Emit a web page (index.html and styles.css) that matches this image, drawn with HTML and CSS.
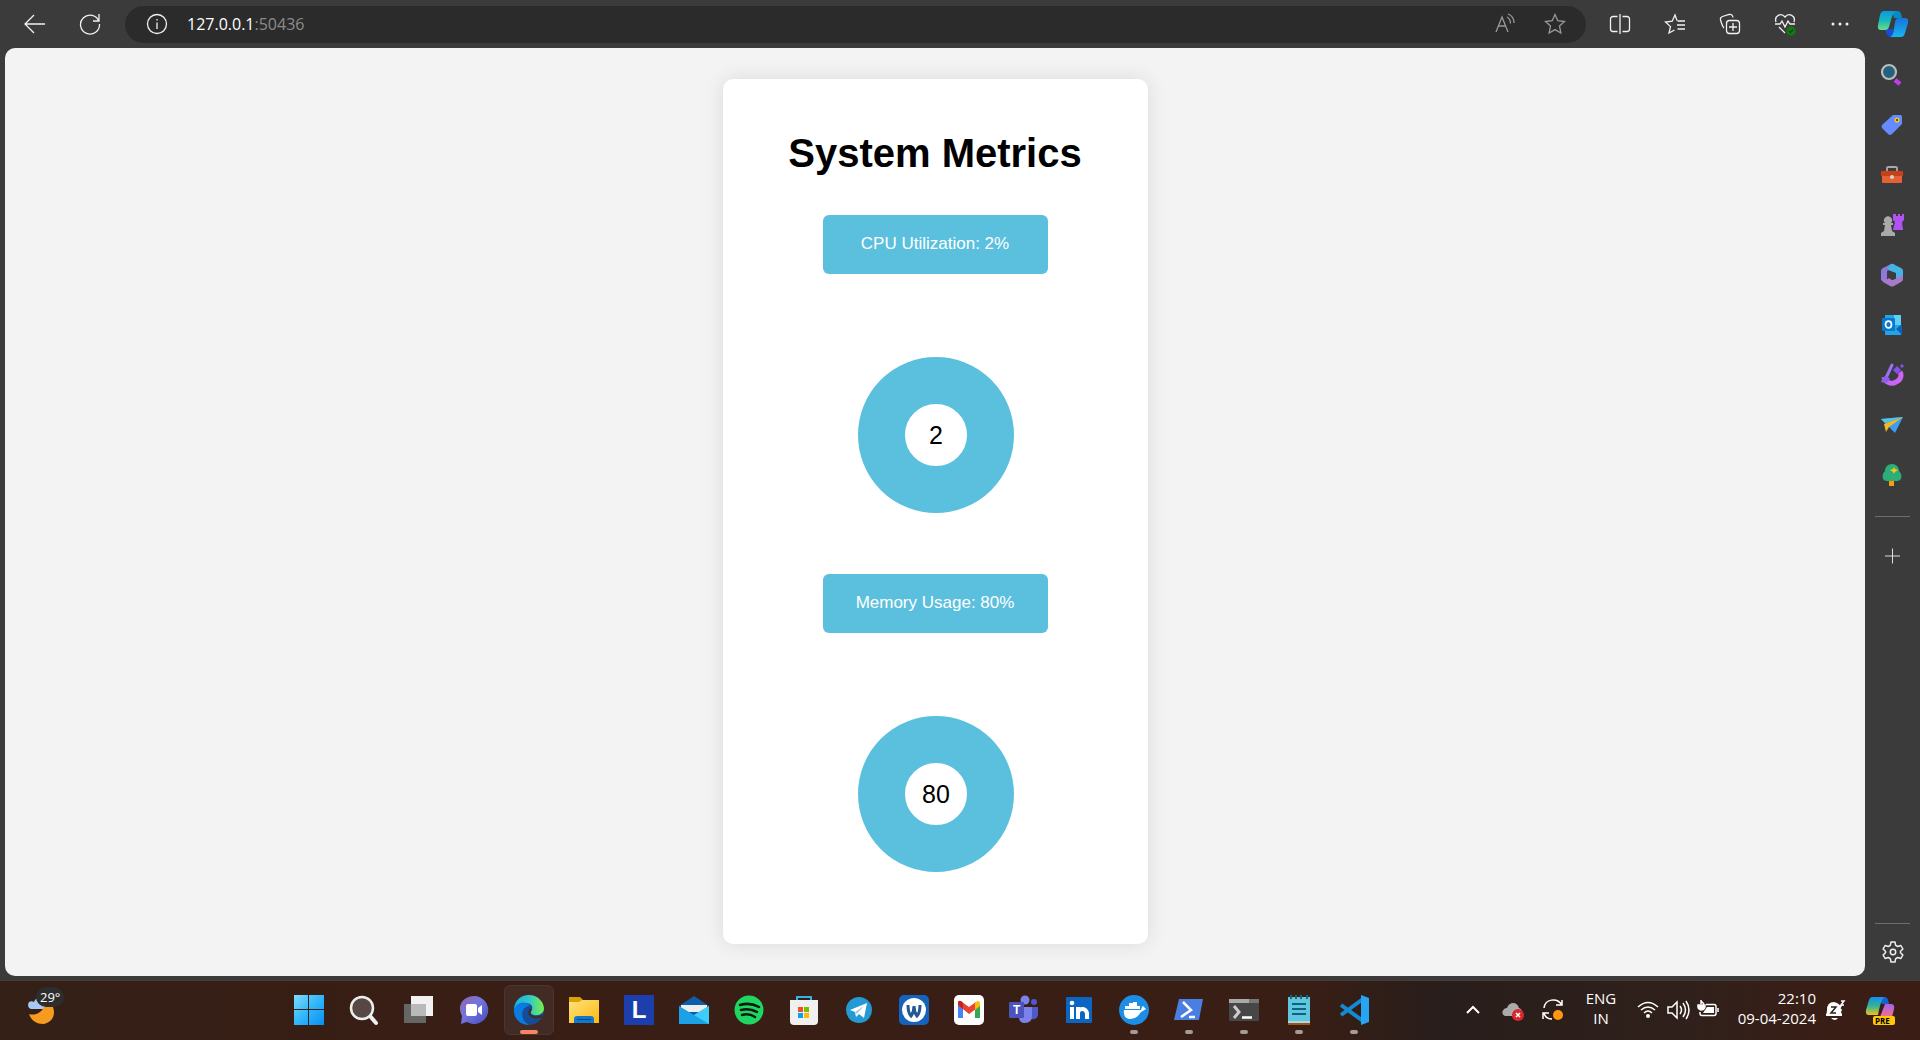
FILE: index.html
```html
<!DOCTYPE html>
<html lang="en">
<head>
<meta charset="utf-8">
<title>System Metrics</title>
<link rel="stylesheet" href="styles.css">
</head>
<body>
<div class="desktop">
  <div class="browser">
    <header class="toolbar">
      <button class="tool" aria-label="Back"><svg width="24" height="24" viewBox="0 0 24 24"><path d="M22 12H2.500M11 3L2 12l9 9"/></svg></button>
      <button class="tool refresh" aria-label="Refresh"><svg width="24" height="24" viewBox="0 0 24 24"><path d="M21 9.500A9.500 9.500 0 1 0 21.500 12M21 2v7h-6"/></svg></button>
      <div class="address">
        <button class="tool info" aria-label="Site information"><svg width="24" height="24" viewBox="0 0 24 24"><circle cx="12" cy="12" r="9.500"/><path d="M12 10.500v6.500M12 7v1.500"/></svg></button>
        <a class="url" href="#">127.0.0.1<span class="port">:50436</span></a>
        <button class="tool dim" aria-label="Read aloud"><svg width="24" height="24" viewBox="0 0 24 24"><path d="M3 20L9 5l6 15M5.500 14h7M14 5c2 1 3.500 3 3.500 6.500M15 2c4 1.500 6 4 6 9"/></svg></button>
        <button class="tool dim" aria-label="Add to favorites"><svg width="24" height="24" viewBox="0 0 24 24"><path d="M12 2.500l2.800 6.200 6.700.8-5 4.600 1.400 6.900-5.900-3.400-5.900 3.400 1.400-6.900-5-4.600 6.700-.8z"/></svg></button>
      </div>
      <div class="actions">
        <button class="tool" aria-label="Split screen"><svg width="24" height="24" viewBox="0 0 24 24"><path d="M9.500 4.500H5a2.500 2.500 0 0 0-2.500 2.500v10A2.500 2.500 0 0 0 5 19.500h4.500M14.500 4.500H19a2.500 2.500 0 0 1 2.500 2.500v10a2.500 2.500 0 0 1-2.500 2.500h-4.500M12 2v20"/></svg></button>
        <button class="tool" aria-label="Favorites"><svg width="24" height="24" viewBox="0 0 24 24"><path d="M14 8.500l-2-5.500-2.800 6.200-6.700.8 5 4.600L6 21l5.500-3M14.500 9H22M14 13h8M14.500 17H22"/></svg></button>
        <button class="tool" aria-label="Collections"><svg width="24" height="24" viewBox="0 0 24 24"><rect x="8.500" y="8.500" width="13" height="13" rx="3"/><path d="M15 11v8M11 15h8M6 16c-1-1-2-3-3.500-8-.4-2 .5-3 2-3.500L11 2.500c2-.5 3.500 0 4 3"/></svg></button>
        <button class="tool" aria-label="Browser essentials"><svg width="24" height="24" viewBox="0 0 24 24"><path d="M3 10C1 4 8 0 12 5c4-5 11-1 9 5M2 12h5l2-3 3 6 3-6 2 3h5M6 15l6 6"/><circle class="ok" cx="18" cy="19" r="4.500"/><path d="M16 19l1.500 1.500L20 17.500" stroke="#064906"/></svg></button>
        <button class="tool" aria-label="More"><svg width="24" height="24" viewBox="0 0 24 24"><g class="fill"><circle cx="5" cy="12" r="1.500"/><circle cx="12" cy="12" r="1.500"/><circle cx="19" cy="12" r="1.500"/></g></svg></button>
      </div>
      <button class="tool copilot" aria-label="Copilot"><svg width="32" height="32" viewBox="0 0 32 32"><defs><linearGradient id="cl" x2="0" y2="1"><stop stop-color="#079be0"/><stop offset=".5" stop-color="#1bb6bb"/><stop offset="1" stop-color="#69dd83"/></linearGradient><linearGradient id="cr" x2="0" y2="1"><stop stop-color="#1773db"/><stop offset="1" stop-color="#17b6f0"/></linearGradient></defs><path fill="#078bc6" d="M15 3h6q3 0 4 7h-8z"/><path fill="#164cd8" d="M8 21h9l-2 8h-2q-3 0-5-8z"/><path fill="url(#cl)" d="M7 3h12q-3 1-5 9l-2 7q-1 3-4 3H4q-4 0-3-5L3 7q1-4 4-4z"/><path fill="url(#cr)" d="M21 10h7q4 0 3 5l-3 10q-1 4-4 4H13q3-1 4-8l1-7q1-4 3-4z"/></svg></button>
    </header>

    <main class="viewport">
      <section class="card">
        <h1>System Metrics</h1>
        <div class="metric">CPU Utilization: 2%</div>
        <div class="chart"><div class="ring">2</div></div>
        <div class="metric">Memory Usage: 80%</div>
        <div class="chart"><div class="ring">80</div></div>
      </section>
    </main>

    <aside class="sidebar">
      <nav class="apps">
        <button class="app" aria-label="Search"><svg width="24" height="24" viewBox="0 0 24 24"><path d="M15 17l5 4" stroke="#c03cf0" stroke-width="4.500"/><circle cx="9" cy="9" r="7" fill="#24617f" stroke="#b9bbbc" stroke-width="2.200"/></svg></button>
        <button class="app" aria-label="Shopping"><svg width="24" height="24" viewBox="0 0 24 24"><path d="M13 2h8l1 1v8L12 21q-2 2-4 0L2 15q-1-2 0-3z" fill="#668bff"/><circle cx="17" cy="7" r="1.800" fill="#333" stroke="#f5ca16" stroke-width="1.500"/></svg></button>
        <button class="app" aria-label="Tools"><svg width="24" height="24" viewBox="0 0 24 24"><path d="M7 8V5q0-1 2-1h6q2 0 2 1v3" fill="none" stroke="#aaa" stroke-width="1.800"/><rect x="2" y="9" width="20" height="11" rx="1" fill="#e56032"/><path d="M1 8h22v5H1z" fill="#c94016"/><circle cx="12" cy="14" r="2" fill="#d2d2d2"/></svg></button>
        <button class="app" aria-label="Games"><svg width="24" height="24" viewBox="0 0 24 24"><path d="M13 1h3v2h2V1h2v2h2V1h2v6l-2 2 1 8H13l2-8-2-2z" fill="#b152f4"/><path d="M1 23v-3l3-2 1-6H3v-2h2a4 4 0 1 1 6 0h2v2h-2l1 6 3 2v3z" fill="#aaa"/></svg></button>
        <button class="app" aria-label="Microsoft 365"><svg width="24" height="24" viewBox="0 0 24 24"><path d="M11 1L3 5q-2 1-2 3v8q0 2 4 2 2 0 2-3V9q0-2 4-4z" fill="#8c7adb"/><path d="M11 1q2-1 4 1l6 3q2 1 2 3v8l-5 2-2-3V10L8 7q0-4 3-6z" fill="#45b3e5"/><path d="M23 12v4q0 2-2 3l-7 4q-2 1-4 0l-7-4-2-3q5 2 8-1l4 2z" fill="#a979cc"/><path d="M9 8l3 1 4 2v3l-4 3-3-2z" fill="#3b3b3b"/></svg></button>
        <button class="app" aria-label="Outlook"><svg width="24" height="24" viewBox="0 0 24 24"><path fill="#24a4e8" d="M5 2h16v20H5z"/><path fill="#60cff8" d="M14 2h7v10h-7z"/><path fill="#0b65b5" d="M16 16l6-5v11z"/><rect x="2" y="5" width="13" height="13" rx="1" fill="#0878ce"/><ellipse cx="8.500" cy="11.500" rx="3" ry="3.400" fill="none" stroke="#fff" stroke-width="1.700"/></svg></button>
        <button class="app" aria-label="Image creator"><svg width="24" height="24" viewBox="0 0 24 24"><path d="M4 14c1 5 7 8 12 5 5-2 6-7 4-10" fill="none" stroke="#cb65f8" stroke-width="5"/><path d="M12 2L6 15" stroke="#9c70f2" stroke-width="3" stroke-linecap="round"/><path d="M1 19l2-5 4-1 3 3-2 3-3 1z" fill="#8961e8"/><path d="M17 3l4 4-4 4-4-4zM22 1l2 2-2 2-2-2z" fill="#8451ed"/></svg></button>
        <button class="app" aria-label="Drop"><svg width="24" height="24" viewBox="0 0 24 24"><path d="M1 6l22-2-8 16-5-5z" fill="#3e9df0"/><path d="M4 11L23 4 9 14l-3 5z" fill="#f4b922"/><path d="M1 6l22-2-18 6z" fill="#53c4e3"/></svg></button>
        <button class="app" aria-label="Tree"><svg width="24" height="24" viewBox="0 0 24 24"><path d="M9 17h5v6H9z" fill="#f99c0e"/><path d="M12 1c5 0 7 4 7 7 4 4 3 10-2 10H7c-5 0-6-6-2-10 0-4 3-7 7-7z" fill="#2bae78"/><path d="M14 4l1 2 3 1-3 2-1 2-1-2-3-2 3-1z" fill="#ffc01f"/></svg></button>
      </nav>
      <div class="add"><button class="app" aria-label="Customize"><svg width="24" height="24" viewBox="0 0 24 24"><path d="M4 12h15M11.500 4.500v15" stroke="#ddd"/></svg></button></div>
      <div class="settings"><button class="app" aria-label="Settings"><svg width="24" height="24" viewBox="0 0 24 24"><path d="M10 2h4l.7 3.300 2 1.200 3.200-1 2 3.500-2.400 2.300v1.400l2.400 2.300-2 3.500-3.200-1-2 1.200L14 22h-4l-.7-3.300-2-1.200-3.200 1-2-3.500 2.400-2.300v-1.400L2.100 9l2-3.500 3.200 1 2-1.200z" fill="none" stroke="#eee" stroke-width="1.500" stroke-linejoin="round"/><circle cx="12" cy="12" r="2.700" fill="none" stroke="#eee" stroke-width="1.500"/></svg></button></div>
    </aside>
  </div>

  <footer class="taskbar">
    <button class="weather" aria-label="Weather"><svg width="30" height="32" viewBox="0 0 30 32"><path d="M2 14c-3-6 2-8 5-6 2-6 10-4 9 1 4 2 3 5 0 6H4z" fill="#a9c8f4"/><path d="M2 20c6 2 12-1 15-7h9c3 8-1 16-10 17-7 0-12-4-14-10z" fill="#f69a20"/></svg><span class="temp">29°</span></button>
    <nav class="tasks">
      <button class="task" aria-label="Start"><svg width="32" height="32" viewBox="0 0 32 32"><defs><linearGradient id="win" x2="1" y2="1"><stop stop-color="#7ddcfb"/><stop offset=".5" stop-color="#31b7fa"/><stop offset="1" stop-color="#078ff3"/></linearGradient></defs><path fill="url(#win)" d="M1 1h14v14H1zM16 1h15v14H16zM1 16h14v15H1zM16 16h15v15H16z"/></svg></button>
      <button class="task" aria-label="Search"><svg width="32" height="32" viewBox="0 0 32 32"><path d="M22 22l6 7" stroke="#eee" stroke-width="4" stroke-linecap="round"/><circle cx="14" cy="14" r="11" fill="#584843" stroke="#eee" stroke-width="2.500"/></svg></button>
      <button class="task" aria-label="Task view"><svg width="32" height="32" viewBox="0 0 32 32"><path fill="#666" d="M1 10h22v19H1z"/><path fill="#f1f1f1" d="M8 2h22v20H8z"/><path fill="#b9b9b9" d="M8 10h15v12H8z"/></svg></button>
      <button class="task" aria-label="Chat"><svg width="32" height="32" viewBox="0 0 32 32"><defs><linearGradient id="chat" x2="1" y2="1"><stop stop-color="#9565ac"/><stop offset=".45" stop-color="#7275dc"/><stop offset="1" stop-color="#454cc1"/></linearGradient></defs><path fill="url(#chat)" d="M16 2a14 14 0 1 1-7 26l-6 2 1-8C-2 11 6 2 16 2z"/><rect x="8" y="10" width="11" height="12" rx="2" fill="#fff"/><path fill="#fff" d="M20 14l4-3v10l-4-3z"/></svg></button>
      <button class="task active" aria-label="Edge"><svg width="32" height="32" viewBox="0 0 32 32"><defs><linearGradient id="edge" x2="1" y2="0"><stop stop-color="#1cafe3"/><stop offset=".5" stop-color="#30c6cb"/><stop offset="1" stop-color="#7af047"/></linearGradient></defs><circle cx="16" cy="16" r="15" fill="#164b96"/><path d="M1 15C2 5 9 1 16 1c9 0 15 7 15 14-1 8-13 7-13 4s2-3 1-7c-3-5-12-4-18 3z" fill="url(#edge)"/><path d="M1 15C5 7 14 7 17 12c-8-1-12 13-1 19C6 31 0 23 1 15z" fill="#087ce0"/><path d="M18 15c-5 5 2 11 11 7" fill="none" stroke="#422b24" stroke-width="2"/></svg></button>
      <button class="task" aria-label="File Explorer"><svg width="32" height="32" viewBox="0 0 32 32"><defs><linearGradient id="folder" x2="1" y2="1"><stop stop-color="#ffe27a"/><stop offset="1" stop-color="#fdb913"/></linearGradient></defs><path fill="#dda006" d="M1 3h11l3 3v5H1z"/><path fill="url(#folder)" d="M1 8h10l3-2h17v23H1z"/><path fill="#1378c9" d="M6 29v-4q0-3 3-3h14q3 0 3 3v4z"/><path stroke="#07488b" d="M9 25.500h14"/></svg></button>
      <button class="task" aria-label="L"><span class="letter">L</span></button>
      <button class="task" aria-label="Mail"><svg width="32" height="32" viewBox="0 0 32 32"><path fill="#0c5eaa" d="M1 12l15-10 15 10-15 10z"/><path fill="#eee" d="M3 11h26v7H3z"/><path fill="#1ca1e7" d="M1 12l15 9 15-9v18H1z"/><path fill="#3ccdf8" d="M31 12v18L16 21z"/></svg></button>
      <button class="task" aria-label="Spotify"><svg width="32" height="32" viewBox="0 0 32 32"><circle cx="16" cy="16" r="14.500" fill="#1ed760"/><path d="M7 11q10-3 19 2M8 16q9-2 16 2M9 21q7-2 13 2" fill="none" stroke="#10170f" stroke-width="2.500" stroke-linecap="round"/></svg></button>
      <button class="task" aria-label="Microsoft Store"><svg width="32" height="32" viewBox="0 0 32 32"><path d="M9 7V3h14v4" fill="none" stroke="#30b5e8" stroke-width="2"/><path fill="#f0f0f0" d="M2 6h28v21q0 4-4 4H6q-4 0-4-4z"/><path fill="#f15022" d="M10 13h5v5h-5z"/><path fill="#7fba00" d="M16 13h5v5h-5z"/><path fill="#00a4ef" d="M10 19h5v5h-5z"/><path fill="#ffb900" d="M16 19h5v5h-5z"/></svg></button>
      <button class="task" aria-label="Telegram"><svg width="32" height="32" viewBox="0 0 32 32"><circle cx="16" cy="16" r="13" fill="#229bd5"/><path d="M7 16l17-7-3 15-5-4-3 3-1-5z" fill="#fff"/><path d="M12 18l9-6-7 8" fill="#a9c9df"/></svg></button>
      <button class="task" aria-label="W"><svg width="32" height="32" viewBox="0 0 32 32"><rect x="1" y="1" width="30" height="30" rx="5" fill="#1463bd"/><circle cx="16" cy="16" r="12" fill="#fff"/><path d="M10 11q0 8 3 11 3-4 3-10 0 6 3 10 3-3 3-11" fill="none" stroke="#245991" stroke-width="3"/></svg></button>
      <button class="task" aria-label="Gmail"><svg width="32" height="32" viewBox="0 0 32 32"><rect x="1" y="1" width="30" height="30" rx="5" fill="#fff"/><path fill="#4285f4" d="M5 10l5 4v10H5z"/><path fill="#34a853" d="M22 14l5-4v14h-5z"/><path fill="#ea4335" d="M5 8q1-2 4 0l7 5 7-5v7l-7 5-11-9z"/><path fill="#c5221f" d="M5 8q2-3 5 1v6l-5-4z"/><path fill="#fbbc04" d="M22 9q4-4 5 0v3l-5 4z"/></svg></button>
      <button class="task" aria-label="Teams"><svg width="32" height="32" viewBox="0 0 32 32"><circle cx="17" cy="6" r="4.500" fill="#7b83eb"/><circle cx="26" cy="8" r="3" fill="#5059c9"/><path fill="#5059c9" d="M20 13h10v7q0 6-7 5z"/><path fill="#7b83eb" d="M12 13h12v9q0 7-7 7-6 0-6-6z"/><rect x="1" y="8" width="15" height="16" rx="1" fill="#4b53bc"/><text x="5" y="20" fill="#fff" font-family="Liberation Sans" font-weight="bold" font-size="12">T</text></svg></button>
      <button class="task" aria-label="LinkedIn"><svg width="32" height="32" viewBox="0 0 32 32"><rect x="3" y="3" width="26" height="26" rx="1" fill="#0a66c2"/><circle cx="9" cy="9" r="2.300" fill="#fff"/><path d="M9 13v12M15 13v12M15 19q0-4 4-4t5 4v6" fill="none" stroke="#fff" stroke-width="4"/></svg></button>
      <button class="task running" aria-label="Docker"><svg width="32" height="32" viewBox="0 0 32 32"><circle cx="16" cy="16" r="15" fill="#1d8ee8"/><path fill="#fff" d="M6 16h17q1-4 2-4l3 3q-3 2-5 3-5 8-12 7-6-1-5-9zM7 12h4v3H7zM11 9h4v6h-4zM15 8h4v7h-4zM19 12h3v3h-3z"/></svg></button>
      <button class="task running" aria-label="PowerShell"><svg width="32" height="32" viewBox="0 0 32 32"><path fill="#4a7ee3" d="M6 5h24l-4 21H1z"/><path d="M10 8l8 8-10 7M16 23h6" fill="none" stroke="#fff" stroke-width="2.500"/></svg></button>
      <button class="task running" aria-label="Terminal"><svg width="32" height="32" viewBox="0 0 32 32"><rect x="1" y="5" width="30" height="22" rx="1" fill="#474747"/><path fill="#aaa" d="M1 5h20v4H1z"/><path fill="#777" d="M21 5h10v4H21z"/><path d="M6 12l5 6-5 6" fill="none" stroke="#ccc" stroke-width="3"/><path stroke="#fff" stroke-width="2.500" d="M14 23.500h10"/></svg></button>
      <button class="task running" aria-label="Notepad"><svg width="32" height="32" viewBox="0 0 32 32"><path fill="#60c5df" d="M5 3h22v26H5z"/><path stroke="#eee" d="M5 28h22"/><path stroke="#a7510f" stroke-width="2" d="M5 30h22"/><path stroke="#0b637d" stroke-width="2" d="M9 10h14M9 15h14M9 20h14"/><path stroke="#17687f" stroke-width="2" d="M8 1v4M13 1v4M18 1v4M24 1v4"/></svg></button>
      <button class="task running" aria-label="Visual Studio Code"><svg width="32" height="32" viewBox="0 0 32 32"><path d="M3 11l22 16M3 21L25 5" stroke="#138bd2" stroke-width="4"/><path fill="#28a5f2" d="M23 1l8 3v24l-8 3z"/></svg></button>
    </nav>
    <div class="tray">
      <button class="tray-icon caret" aria-label="Show hidden icons"><svg width="24" height="24" viewBox="0 0 24 24"><path d="M6 15l6-6 6 6" stroke-width="2"/></svg></button>
      <button class="tray-icon cloud" aria-label="OneDrive"><svg width="24" height="24" viewBox="0 0 24 24"><path d="M4 18c-5-2-2-8 2-8 2-6 10-7 12 0 5 2 4 8 0 8z" fill="#aaa" stroke="none"/><circle cx="17" cy="17" r="6" fill="#db2530" stroke="none"/><path d="M15 15l4 4M19 15l-4 4"/></svg></button>
      <button class="tray-icon sync" aria-label="Update"><svg width="24" height="24" viewBox="0 0 24 24"><path d="M3 10c1-9 13-11 18-3M21 2v5h-6M3 15c1 4 4 6 8 6M2 21v-6h6"/><circle cx="17" cy="17" r="5" fill="#ff9810" stroke="none"/></svg></button>
      <button class="language" aria-label="Language"><span>ENG</span><span>IN</span></button>
      <button class="quick" aria-label="Network, volume and battery">
        <svg width="24" height="24" viewBox="0 0 24 24"><path d="M2 9q10-9 20 0M5 12q7-6 14 0M8 15q4-4 8 0"/><circle cx="12" cy="18" r="2" fill="#fff" stroke="none"/></svg>
        <svg width="24" height="24" viewBox="0 0 24 24"><path d="M2 9h4l5-5v16l-5-5H2zM14 8q3 4 0 8M17 5q5 7 0 14M20 3q6 9 0 18"/></svg>
        <svg width="24" height="24" viewBox="0 0 24 24"><path d="M10 6.500h8q2 0 2 2v7q0 2-2 2H6q-2 0-2-2V14M22 10v4"/><path d="M11 9h7v6H7z" fill="#fff" stroke="none"/><path d="M5 2v4M2 7h7v2q-1 3-4 3-3-1-3-3zM5 3l3 3" fill="#fff"/></svg>
      </button>
      <button class="clock" aria-label="Date and time"><time>22:10</time><time>09-04-2024</time></button>
      <button class="tray-icon bell" aria-label="Notifications"><svg width="24" height="24" viewBox="0 0 24 24"><path fill="#fff" stroke="none" d="M4 18v-2q1-1 1-4 0-8 7-8 7 1 7 8 0 3 1 4v2zM9 20h7q-3 4-7 0z"/><path d="M9 9h5l-5 6h5" stroke="#30201b"/><path d="M16 8h3l-3 4h4M19 3h3l-3 4h3"/></svg></button>
      <button class="tray-icon preview" aria-label="Copilot preview"><svg width="32" height="32" viewBox="0 0 32 32"><defs><linearGradient id="pl" x2="0" y2="1"><stop stop-color="#148ff1"/><stop offset=".5" stop-color="#32b398"/><stop offset="1" stop-color="#eec419"/></linearGradient><linearGradient id="pr" x2="0" y2="1"><stop stop-color="#a162f2"/><stop offset="1" stop-color="#fa7184"/></linearGradient></defs><path fill="#1762cb" d="M13 3h7q3 0 4 7h-7z"/><path fill="url(#pl)" d="M7 3h13q-4 1-7 18H4q-4 0-3-5L4 6q1-3 3-3z"/><path fill="url(#pr)" d="M20 10h6q4 0 3 5l-2 8H15z"/><rect x="8" y="22" width="22" height="9" rx="2" fill="#ffc80a"/><text x="10" y="30" font-family="Open Sans" font-weight="bold" font-size="8">PRE</text></svg></button>
    </div>
  </footer>
</div>
</body>
</html>
```
FILE: styles.css
```css
* {
  box-sizing: border-box;
}

body {
  margin: 0;
  font-family: "Liberation Sans", Arial, sans-serif;
  background: #3b3b3b;
}

button {
  margin: 0;
  padding: 0;
  border: 0;
  background: none;
  color: inherit;
  font: inherit;
}

svg {
  display: block;
  flex: none;
}

.desktop {
  min-height: 100vh;
  display: flex;
  flex-direction: column;
}

.browser {
  flex: 1;
  display: grid;
  grid-template-columns: 1fr 55px;
  grid-template-rows: 48px 1fr;
  padding: 0 0 4px 5px;
}

/* Browser toolbar */
.toolbar {
  grid-column: 1 / 3;
  display: flex;
  align-items: center;
  padding: 0 11px 0 14px;
}

.tool {
  display: grid;
  place-items: center;
  width: 32px;
  height: 32px;
  margin-right: 23px;
}

.tool svg {
  fill: none;
  stroke: #f2f2f2;
  stroke-width: 1.3;
}

.tool .fill {
  fill: #f2f2f2;
  stroke: none;
}

.tool .ok {
  fill: #107c10;
  stroke: none;
}

.refresh {
  margin-right: 19px;
}

.address {
  flex: 1;
  display: flex;
  align-items: center;
  height: 37px;
  margin-right: 18px;
  padding: 0 15px 0 16px;
  border-radius: 19px;
  background: #2b2b2b;
}

.address .tool {
  margin: 0;
}

.address .info {
  margin-right: 14px;
}

.address .dim + .dim {
  margin-left: 18px;
}

.tool.dim svg {
  stroke: #999;
}

.url {
  flex: 1;
  color: #fff;
  font: 16px/24px "Open Sans", sans-serif;
  text-decoration: none;
}

.port {
  color: #8b8b8b;
}

.actions {
  display: flex;
}

.actions .tool:last-child {
  margin-right: 21px;
}

.toolbar .copilot {
  margin: 0;
}

.tool.copilot svg {
  stroke: none;
}

/* Page */
.viewport {
  display: flex;
  justify-content: center;
  align-items: flex-start;
  padding: 31px 0;
  border-radius: 10px;
  background: #f3f3f3;
}

.card {
  display: flex;
  flex-direction: column;
  align-items: center;
  width: 425px;
  padding: 51px 25px 24px;
  border-radius: 10px;
  background: #fff;
  box-shadow: 0 0 20px rgba(0, 0, 0, 0.1);
}

h1 {
  margin: 0 0 39px;
  font-size: 40px;
  line-height: 46px;
}

.metric {
  width: 225px;
  padding: 19px 0 20px;
  border-radius: 6px;
  background: #5bc0de;
  color: #fff;
  font-size: 17px;
  line-height: 20px;
  text-align: center;
}

.chart {
  display: grid;
  place-items: center;
  width: 250px;
  height: 250px;
  margin: 37px 0 13px;
  padding: 0 0 2px 2px;
}

.chart:last-child {
  margin-bottom: 0;
}

.ring {
  display: grid;
  place-items: center;
  width: 156px;
  height: 156px;
  border: 47px solid #5bc0de;
  border-radius: 50%;
  font-size: 25px;
  line-height: 28px;
}

/* Browser sidebar */
.sidebar {
  display: flex;
  flex-direction: column;
  align-items: center;
}

.apps {
  display: flex;
  flex-direction: column;
  gap: 10px;
  padding: 7px 0 21px;
}

.app {
  display: grid;
  place-items: center;
  width: 35px;
  height: 40px;
}

.apps .app {
  padding-right: 2px;
}

.add,
.settings {
  border-top: 1px solid #6d6d6d;
}

.add {
  padding-top: 19px;
}

.settings {
  margin-top: auto;
  padding: 8px 0 4px;
}

/* Taskbar */
.taskbar {
  display: grid;
  grid-template-columns: 284px 1fr auto;
  align-items: center;
  height: 60px;
  padding-bottom: 1px;
  border-top: 1px solid #4b3b34;
  background: linear-gradient(90deg, #342017 0, #381e15 20%, #391e15 68%, #281e1b 75%, #30201b 88%, #3a1e15 96%);
  color: #fff;
  font-family: "Open Sans", sans-serif;
}

.weather {
  position: relative;
  justify-self: start;
  margin-left: 27px;
}

.temp {
  position: absolute;
  top: -7px;
  left: 9px;
  padding: 0 4px;
  border-radius: 10px;
  background: #2d2d2d;
  font-size: 13px;
  line-height: 20px;
}

.tasks {
  display: flex;
  gap: 5px;
}

.task {
  position: relative;
  display: grid;
  place-items: center;
  width: 50px;
  height: 50px;
  border-radius: 6px;
}

.task.active {
  border: 1px solid #4b3731;
  background: #422b24;
}

.running::after,
.active::after {
  position: absolute;
  bottom: 1px;
  left: 50%;
  width: 8px;
  height: 4px;
  border-radius: 2px;
  background: #a79a96;
  content: "";
  transform: translateX(-50%);
}

.active::after {
  bottom: 0;
  width: 18px;
  background: #f78468;
}

.letter {
  width: 30px;
  height: 30px;
  background: #1d3fae;
  font: bold 24px/30px "Liberation Sans", Arial, sans-serif;
  text-align: center;
}

.tray {
  display: flex;
  align-items: center;
  padding-right: 23px;
}

.tray svg {
  fill: none;
  stroke: #fff;
  stroke-width: 1.5;
}

.caret,
.cloud {
  margin-right: 16px;
}

.sync {
  margin-right: 20px;
}

.language,
.clock {
  display: flex;
  flex-direction: column;
  padding-bottom: 4px;
  font-size: 15px;
  line-height: 20px;
}

.language {
  align-items: center;
  width: 32px;
  margin-right: 19px;
}

.quick {
  display: flex;
  gap: 6px;
  margin-right: 16px;
}

.clock {
  align-items: flex-end;
  width: 80px;
  margin-right: 6px;
}

.bell {
  margin-right: 19px;
}

.tray .preview svg,
.preview text {
  fill: #000;
  stroke: none;
}
```
